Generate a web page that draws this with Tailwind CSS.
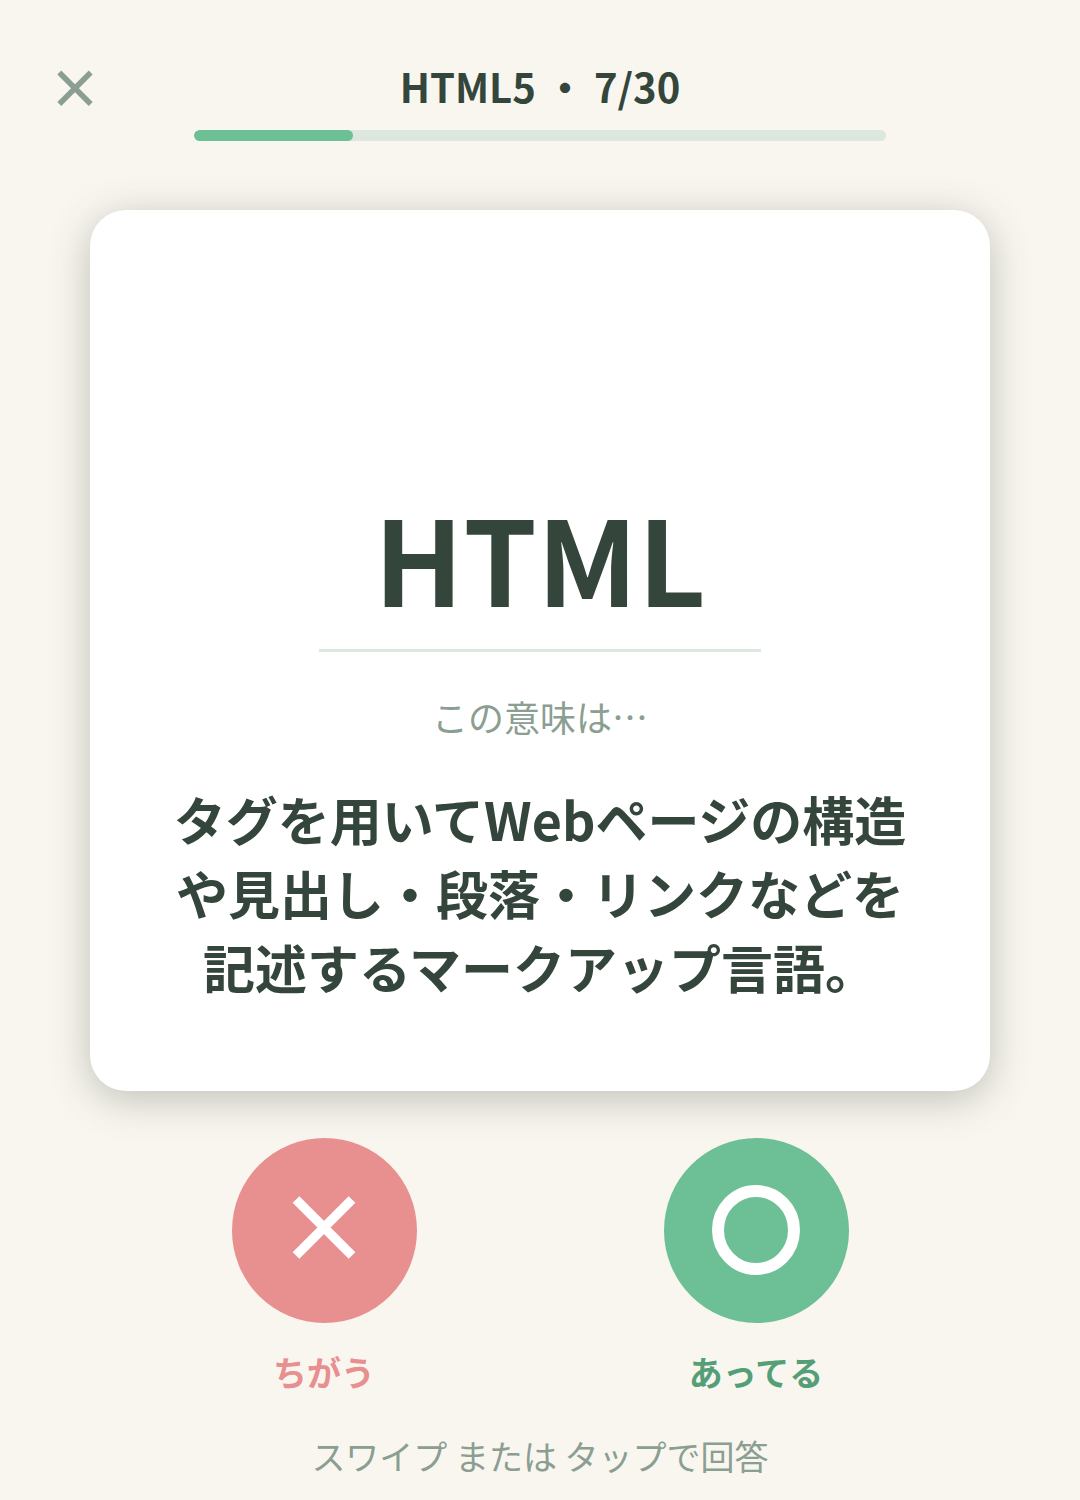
<!DOCTYPE html>
<html lang="ja">
<head>
    <meta charset="UTF-8">
    <meta name="viewport" content="width=device-width, initial-scale=1.0">
    <title>HTML5 クイズ</title>
    <script src="https://cdn.jsdelivr.net/npm/@tailwindcss/browser@4"></script>
</head>
<body class="min-h-screen bg-[#f9f6ef] font-['Noto_Sans_CJK_JP',sans-serif] text-[#34463c]">
    <div class="flex flex-col items-center">
        <!-- ヘッダー -->
        <header class="grid w-full grid-cols-[80px_1fr_80px] items-center px-[35px] pt-12">
            <button type="button" aria-label="閉じる" class="flex size-20 items-center justify-center text-[#8b9e92]">
                <svg class="size-9" viewBox="0 0 36 36" fill="none" stroke="currentColor" stroke-width="5.5">
                    <path d="M2.3 2.5 33.7 34M33.7 2.5 2.3 34"/>
                </svg>
            </button>
            <h1 class="pb-1 text-center text-[40px] leading-16 font-bold">HTML5 ・ 7/30</h1>
        </header>
        <div class="mt-0.5 h-[11px] w-[64%] overflow-hidden rounded-full bg-[#dce7de]">
            <div class="h-full rounded-full bg-[#6dbf95]" style="width: 23%"></div>
        </div>

        <!-- 問題カード -->
        <main class="mt-[69px] w-10/12 rounded-[36px] bg-white px-[82px] pt-[266px] pb-[87px] text-center shadow-[0_8px_40px_rgba(52,70,60,0.3)]">
            <h2 class="text-[118px] leading-[160px] font-bold">HTML</h2>
            <hr class="mx-auto mt-[13px] w-[60%] border-t-[3px] border-[#dce7de]">
            <p class="mt-[38px] text-[36px] leading-[52px] text-[#8b9e92]">この意味は…</p>
            <p class="mt-10 text-[52px] leading-[74px] font-bold">タグを用いてWebページの構造や見出し・段落・リンクなどを記述するマークアップ言語。</p>
        </main>

        <!-- 回答ボタン -->
        <div class="mt-[47px] grid w-[80%] grid-cols-2">
            <button type="button" class="flex flex-col items-center gap-[23px] text-[34px] leading-[52px] font-bold text-[#e88f8f]">
                <svg class="size-[185px]" viewBox="0 0 185 185" fill="none" stroke="#fff" stroke-width="9.5">
                    <circle cx="92.5" cy="92.5" r="92.5" fill="#e88f8f" stroke="none"/>
                    <path d="M64 61.5 120 117.5M120 61.5 64 117.5"/>
                </svg>
                ちがう
            </button>
            <button type="button" class="flex flex-col items-center gap-[23px] text-[34px] leading-[52px] font-bold text-[#559f78]">
                <svg class="size-[185px]" viewBox="0 0 185 185" fill="none" stroke="#fff" stroke-width="12">
                    <circle cx="92.5" cy="92.5" r="92.5" fill="#6dbf95" stroke="none"/>
                    <ellipse cx="92" cy="92" rx="38" ry="39"/>
                </svg>
                あってる
            </button>
        </div>
        <p class="mt-8 text-[34px] leading-[52px] text-[#8b9e92]">スワイプ または タップで回答</p>
    </div>
</body>
</html>
